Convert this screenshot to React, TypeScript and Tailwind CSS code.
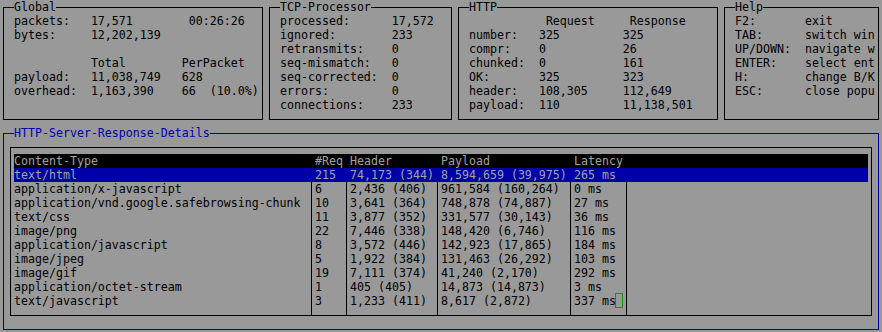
import React from 'react';

// one terminal cell is 7px wide, 14px high
type Seg = [number, string];

const line = (segs: Seg[]) => {
  let out = '';
  segs.forEach(([col, text]) => {
    out = out.padEnd(col, ' ') + text;
  });
  return out;
};

const globalRows: Seg[][] = [
  [[0, 'packets:'], [11, '17,571'], [25, '00:26:26']],
  [[0, 'bytes:'], [11, '12,202,139']],
  [],
  [[11, 'Total'], [24, 'PerPacket']],
  [[0, 'payload:'], [11, '11,038,749'], [24, '628']],
  [[0, 'overhead:'], [11, '1,163,390'], [24, '66'], [28, '(10.0%)']],
  [],
];

const tcpRows: Seg[][] = [
  [[0, 'processed:'], [16, '17,572']],
  [[0, 'ignored:'], [16, '233']],
  [[0, 'retransmits:'], [16, '0']],
  [[0, 'seq-mismatch:'], [16, '0']],
  [[0, 'seq-corrected:'], [16, '0']],
  [[0, 'errors:'], [16, '0']],
  [[0, 'connections:'], [16, '233']],
];

const httpRows: Seg[][] = [
  [[11, 'Request'], [23, 'Response']],
  [[0, 'number:'], [10, '325'], [22, '325']],
  [[0, 'compr:'], [10, '0'], [22, '26']],
  [[0, 'chunked:'], [10, '0'], [22, '161']],
  [[0, 'OK:'], [10, '325'], [22, '323']],
  [[0, 'header:'], [10, '108,305'], [22, '112,649']],
  [[0, 'payload:'], [10, '110'], [22, '11,138,501']],
];

const helpRows: Seg[][] = [
  [[0, 'F2:'], [10, 'exit']],
  [[0, 'TAB:'], [10, 'switch win']],
  [[0, 'UP/DOWN:'], [10, 'navigate w']],
  [[0, 'ENTER:'], [10, 'select ent']],
  [[0, 'H:'], [10, 'change B/K']],
  [[0, 'ESC:'], [10, 'close popu']],
  [],
];

const tableHead = ['Content-Type', '#Req', 'Header', 'Payload', 'Latency'];

const tableRows = [
  ['text/html', '215', '74,173 (344)', '8,594,659 (39,975)', '265 ms'],
  ['application/x-javascript', '6', '2,436 (406)', '961,584 (160,264)', '0 ms'],
  ['application/vnd.google.safebrowsing-chunk', '10', '3,641 (364)', '748,878 (74,887)', '27 ms'],
  ['text/css', '11', '3,877 (352)', '331,577 (30,143)', '36 ms'],
  ['image/png', '22', '7,446 (338)', '148,420 (6,746)', '116 ms'],
  ['application/javascript', '8', '3,572 (446)', '142,923 (17,865)', '184 ms'],
  ['image/jpeg', '5', '1,922 (384)', '131,463 (26,292)', '103 ms'],
  ['image/gif', '19', '7,111 (374)', '41,240 (2,170)', '292 ms'],
  ['application/octet-stream', '1', '405 (405)', '14,873 (14,873)', '3 ms'],
  ['text/javascript', '3', '1,233 (411)', '8,617 (2,872)', '337 ms'],
];

const cellCls = [
  'w-[298px] border-r',
  'w-[35px] pl-[3px] border-r',
  'w-[91px] pl-[3px] border-r',
  'w-[133px] pl-[3px] border-r',
  'w-[56px] pl-[3px] border-r',
  'flex-1',
];

interface PanelProps {
  title: string;
  width: string;
  rows: Seg[][];
}

const Panel: React.FC<PanelProps> = ({ title, width, rows }) => (
  <div className={`relative ${width} border border-black pt-[6px] pb-[7px] pl-[10px] overflow-visible`}>
    <span className="absolute -top-[8px] left-[10px] h-[14px] bg-[#999999]">{title}</span>
    <div className="overflow-hidden">
      {rows.map((r, i) => (
        <div key={i} className="h-[14px] whitespace-pre">
          {line(r)}
        </div>
      ))}
    </div>
  </div>
);

interface RowProps {
  cells: string[];
  kind: 'head' | 'sel' | 'data';
  cursor?: boolean;
}

const TableRow: React.FC<RowProps> = ({ cells, kind, cursor }) => {
  const rowCls =
    kind === 'head'
      ? 'bg-black text-[#a3a3a3]'
      : kind === 'sel'
      ? 'bg-[#0000a8] text-[#a3a3a3]'
      : 'text-black';
  const border = kind === 'data' ? 'border-black' : 'border-transparent';
  return (
    <div className={`flex h-[14px] ${rowCls}`}>
      {cells.map((c, i) => (
        <div key={i} className={`${cellCls[i]} ${border} whitespace-pre overflow-visible`}>
          {c}
          {cursor && i === 4 && (
            <span className="relative -top-px -left-px inline-block align-top w-[8px] h-[15px] border border-[#00a000]" />
          )}
        </div>
      ))}
      <div className={`${cellCls[5]}`} />
    </div>
  );
};

export default function App() {
  return (
    <div className="w-[882px] h-[332px] overflow-hidden bg-[#999999] text-black font-['DejaVu_Sans_Mono',monospace] text-[11.625px] leading-[14px]">
      <div className="flex gap-[6px] pl-[3px] pt-[7px]">
        <Panel title="Global" width="w-[260px]" rows={globalRows} />
        <Panel title="TCP-Processor" width="w-[183px]" rows={tcpRows} />
        <Panel title="HTTP" width="w-[260px]" rows={httpRows} />
        <Panel title="Help" width="w-[155px]" rows={helpRows} />
      </div>

      <div className="relative ml-[3px] mt-[13px] w-[876px] border border-[#0000a8] pt-[13px] pb-[13px] pl-[6px]">
        <span className="absolute -top-[8px] left-[10px] h-[14px] bg-[#999999] text-[#0000a8]">
          HTTP-Server-Response-Details
        </span>
        <div className="w-[862px] border border-black pt-[6px] pl-[3px]">
          <div className="w-[854px]">
            <TableRow cells={tableHead} kind="head" />
            {tableRows.map((r, i) => (
              <TableRow key={r[0]} cells={r} kind={i === 0 ? 'sel' : 'data'} cursor={i === tableRows.length - 1} />
            ))}
            <div className="flex h-[7px]">
              {cellCls.slice(0, 5).map((c, i) => (
                <div key={i} className={`${c} border-black`} />
              ))}
            </div>
          </div>
        </div>
      </div>
    </div>
  );
}
